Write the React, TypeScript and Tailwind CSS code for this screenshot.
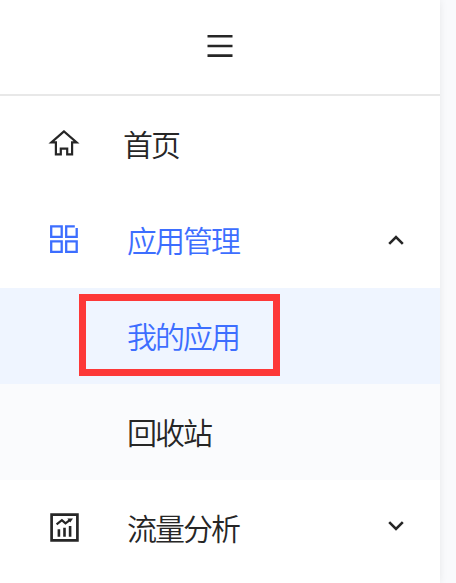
import type { ReactNode } from 'react';

function MenuIcon() {
    return (
        <svg width="26" height="24" viewBox="0 0 26 24" fill="none" stroke="#262626" strokeWidth="2.6">
            <path d="M.5 2.3h25M.5 12h25M.5 21.6h25" />
        </svg>
    );
}

function HomeIcon() {
    return (
        <svg width="32" height="32" viewBox="0 0 32 32" fill="none" stroke="#262626" strokeWidth="2.2">
            <path d="M16 3.4 3.4 14.4H7.9V26.4H12.8V20.6H19.2V26.4H24.1V14.4H28.6Z" />
        </svg>
    );
}

function AppsIcon() {
    return (
        <svg width="32" height="32" viewBox="0 0 32 32" fill="none" stroke="#3d6eff" strokeWidth="2.3">
            <path d="M3.2 2.3h10.5v10.5H3.2zM3.2 17.3h10.5v10.5H3.2zM18.2 17.3h10.5v10.5H18.2z" />
            <path d="M26.8 2.3H18.2v10.5h10.5V4" />
        </svg>
    );
}

function ChartIcon() {
    return (
        <svg width="32" height="32" viewBox="0 0 32 32" fill="none" stroke="#262626">
            <path d="M3.6 2.6h25.8v25.8H3.6z" strokeWidth="2.7" />
            <path d="M10.9 24.7v-7.4M16.5 24.7v-9M22.1 24.7v-10.7" strokeWidth="2.6" />
            <path d="m8.6 12.4 5.3-4.2 3.6 3.2 4.6-3.6" strokeWidth="2.2" />
            <path d="M19.4 6.6h5.6l-2.8 4z" fill="#262626" stroke="none" />
        </svg>
    );
}

function Chevron({ open = false }: { open?: boolean }) {
    return (
        <svg
            width="16"
            height="12"
            viewBox="0 0 16 12"
            fill="none"
            stroke="#262626"
            strokeWidth="2.6"
            className={open ? 'rotate-180' : 'mb-1'}
        >
            <path d="m1.2 2.2 6.8 6.8 6.8-6.8" />
        </svg>
    );
}

function MenuRow({ icon, label, className = '', children }: { icon: ReactNode, label: string, className?: string, children?: ReactNode }) {
    return (
        <div className="flex h-24 items-center pr-9 pl-12">
            {icon}
            <span className={`-mt-0.5 ${className}`}>{label}</span>
            <div className="ml-auto">{children}</div>
        </div>
    );
}

export default function App() {
    return (
        <div className="flex h-[583px] w-[456px] overflow-hidden bg-[#f9fafc] font-['Noto_Sans_CJK_SC',sans-serif] text-[30px] leading-10 font-[350] tracking-[-2px] text-[#262626]">
            <aside className="w-[440px] shrink-0 bg-white shadow-[0_0_8px_rgba(0,0,0,0.08)]">
                <header className="flex h-24 items-center justify-center border-b-2 border-[#e8e8e8] pb-0.5">
                    <MenuIcon />
                </header>
                <nav>
                    <MenuRow icon={<HomeIcon />} label="首页" className="ml-[43px]" />
                    <MenuRow icon={<AppsIcon />} label="应用管理" className="ml-[47px] text-[#3d6eff]">
                        <Chevron open />
                    </MenuRow>
                    <div className="flex h-24 items-center bg-[#eff5ff] pl-[79px] text-[#3d6eff]">
                        <div className="-mt-0.5 flex h-[82px] w-[201px] items-center border-7 border-[#fd3838] pl-[41px]">我的应用</div>
                    </div>
                    <div className="flex h-24 items-center bg-[#fafbfd] pb-0.5 pl-[127px]">回收站</div>
                    <MenuRow icon={<ChartIcon />} label="流量分析" className="ml-[47px]">
                        <Chevron />
                    </MenuRow>
                </nav>
            </aside>
        </div>
    );
}
